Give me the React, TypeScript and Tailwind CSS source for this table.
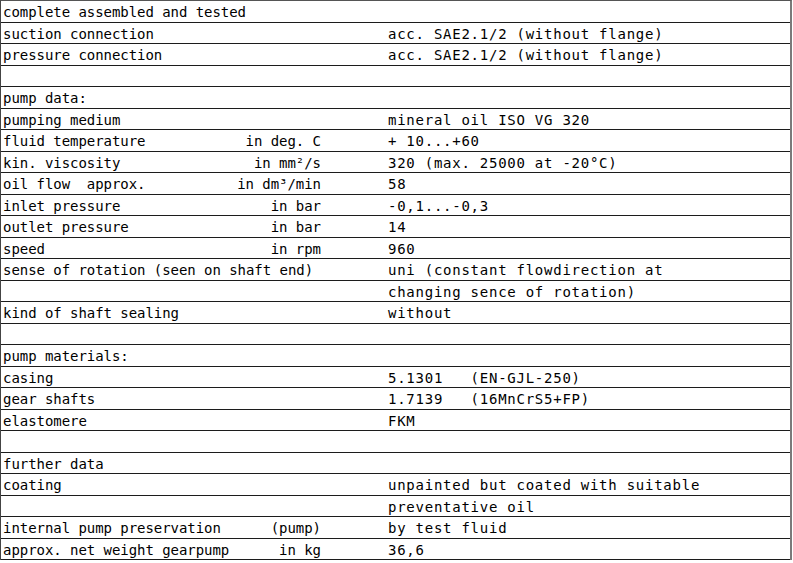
type Row = { label?: string; unit?: string; value?: string };

const rows: Row[] = [
  { label: "complete assembled and tested" },
  { label: "suction connection", value: "acc. SAE2.1/2 (without flange)" },
  { label: "pressure connection", value: "acc. SAE2.1/2 (without flange)" },
  {},
  { label: "pump data:" },
  { label: "pumping medium", value: "mineral oil ISO VG 320" },
  { label: "fluid temperature", unit: "in deg. C", value: "+ 10...+60" },
  { label: "kin. viscosity", unit: "in mm²/s", value: "320 (max. 25000 at -20°C)" },
  { label: "oil flow  approx.", unit: "in dm³/min", value: "58" },
  { label: "inlet pressure", unit: "in bar", value: "-0,1...-0,3" },
  { label: "outlet pressure", unit: "in bar", value: "14" },
  { label: "speed", unit: "in rpm", value: "960" },
  { label: "sense of rotation (seen on shaft end)", value: "uni (constant flowdirection at" },
  { value: "changing sence of rotation)" },
  { label: "kind of shaft sealing", value: "without" },
  {},
  { label: "pump materials:" },
  { label: "casing", value: "5.1301   (EN-GJL-250)" },
  { label: "gear shafts", value: "1.7139   (16MnCrS5+FP)" },
  { label: "elastomere", value: "FKM" },
  {},
  { label: "further data" },
  { label: "coating", value: "unpainted but coated with suitable" },
  { value: "preventative oil" },
  { label: "internal pump preservation", unit: "(pump)", value: "by test fluid" },
  { label: "approx. net weight gearpump", unit: "in kg", value: "36,6" },
];

export default function App() {
  return (
    <div className="min-h-screen bg-white text-black font-['DejaVu_Sans_Mono','Liberation_Mono',monospace] text-[14px] leading-none">
      <div className="w-[792px] border-t border-l border-r-2 border-t-[#555] border-l-[#444] border-r-[#7a7a7a]">
        {rows.map((r, i) => (
          <div
            key={i}
            className="flex h-[21.5px] items-center border-b border-[#1c1c1c] pt-[2px] whitespace-pre"
          >
            <div className="flex w-[387px] shrink-0 pl-[2px] tracking-[-0.05px]">
              <div className="flex w-[318px] justify-between">
                <span>{r.label ?? ""}</span>
                <span>{r.unit ?? ""}</span>
              </div>
            </div>
            <div className="tracking-[0.75px]">{r.value ?? ""}</div>
          </div>
        ))}
      </div>
    </div>
  );
}
